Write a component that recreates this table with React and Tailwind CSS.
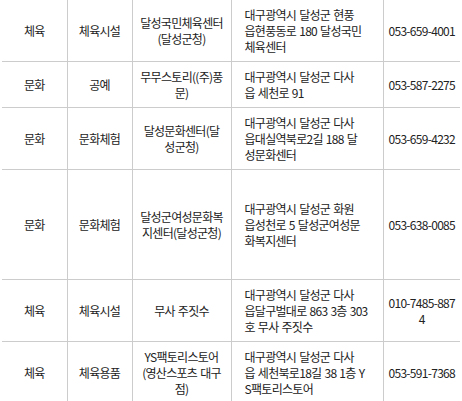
import React from 'react';

const rows = [
  {
    type: '체육',
    kind: '체육시설',
    name: ['달성국민체육센터', '(달성군청)'],
    addr: ['대구광역시 달성군 현풍', '읍현풍동로 180 달성국민', '체육센터'],
    tel: ['053-659-4001'],
  },
  {
    type: '문화',
    kind: '공예',
    name: ['무무스토리((주)풍', '문)'],
    addr: ['대구광역시 달성군 다사', '읍 세천로 91'],
    tel: ['053-587-2275'],
  },
  {
    type: '문화',
    kind: '문화체험',
    name: ['달성문화센터(달', '성군청)'],
    addr: ['대구광역시 달성군 다사', '읍대실역북로2길 188 달', '성문화센터'],
    tel: ['053-659-4232'],
  },
  {
    type: '문화',
    kind: '문화체험',
    name: ['달성군여성문화복', '지센터(달성군청)'],
    addr: ['대구광역시 달성군 화원', '읍성천로 5 달성군여성문', '화복지센터'],
    tel: ['053-638-0085'],
    tall: true,
  },
  {
    type: '체육',
    kind: '체육시설',
    name: ['무사 주짓수'],
    addr: ['대구광역시 달성군 다사', '읍달구벌대로 863 3층 303', '호 무사 주짓수'],
    tel: ['010-7485-887', '4'],
  },
  {
    type: '체육',
    kind: '체육용품',
    name: ['YS팩토리스토어', '(영산스포츠 대구', '점)'],
    addr: ['대구광역시 달성군 다사', '읍 세천북로18길 38 1층 Y', 'S팩토리스토어'],
    tel: ['053-591-7368'],
  },
];

const Lines = ({ lines }) =>
  lines.map((line, i) => (
    <React.Fragment key={i}>
      {i > 0 && <br />}
      {line}
    </React.Fragment>
  ));

export default function App() {
  const cell = 'border-b border-[#cccccc] pt-[7px] pb-[6px] align-middle whitespace-nowrap';
  return (
    <div className="w-[462px] h-[401px] overflow-hidden bg-white">
      <table className="ml-[2px] w-[458px] table-fixed border-collapse font-['Noto_Sans_CJK_KR',sans-serif] text-[12px] leading-4 tracking-[-0.7px] [word-spacing:1px] text-[#222222]">
        <colgroup>
          <col className="w-[65px]" />
          <col className="w-[65px]" />
          <col className="w-[99px]" />
          <col className="w-[152px]" />
          <col className="w-[77px]" />
        </colgroup>
        <tbody>
          {rows.map((r, i) => (
            <tr key={i} className={r.tall ? 'h-[110px]' : ''}>
              <td className={`${cell} border-r text-center`}>{r.type}</td>
              <td className={`${cell} border-r text-center`}>{r.kind}</td>
              <td className={`${cell} border-r text-center`}>
                <Lines lines={r.name} />
              </td>
              <td className={`${cell} border-r pl-[13px] text-left`}>
                <Lines lines={r.addr} />
              </td>
              <td className={`${cell} text-center`}>
                <Lines lines={r.tel} />
              </td>
            </tr>
          ))}
        </tbody>
      </table>
    </div>
  );
}
